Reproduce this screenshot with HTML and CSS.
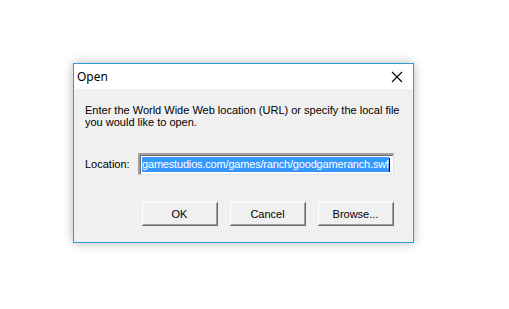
FILE: index.html
```html
<html>
<head>
<meta name="viewport" content="width=device-width, initial-scale=1">
<title>Open</title>
<link rel="stylesheet" href="styles.css">
</head>
<body>
<div class="desk">
	<div class="dialog">
		<div class="titlebar">
			<span class="title">Open</span>
			<svg class="close" width="12" height="12" viewBox="0 0 12 12">
				<path d="M1 1 L11 11 M11 1 L1 11" stroke="#000" stroke-width="1.1" fill="none"/>
			</svg>
		</div>
		<div class="body">
			<p class="info">Enter the World Wide Web location (URL) or specify the local file<br>you would like to open.</p>
			<div class="row">
				<label class="lbl">Location:</label>
				<div class="field">
					<span class="sel">gamestudios.com/games/ranch/goodgameranch.swf</span><span class="caret"></span>
				</div>
			</div>
			<div class="buttons">
				<button class="btn">OK</button>
				<button class="btn">Cancel</button>
				<button class="btn">Browse...</button>
			</div>
		</div>
	</div>
</div>
</body>
</html>
```
FILE: styles.css
```css
body {
margin: 0;
background: white;
font-family: "Liberation Sans", Arial, sans-serif;
}

.desk {
padding: 63px 0 0 73px;
}

.dialog {
width: 339px;
height: 178px;
border: 1px solid #2b9fd3;
background: #f0f0f0;
box-shadow: 0 0 10px rgba(0,0,0,0.28);
display: flex;
flex-direction: column;
}

.titlebar {
height: 25px;
background: white;
display: flex;
align-items: center;
justify-content: space-between;
padding: 0 10px 0 3px;
}

.title {
font-family: "Noto Sans", "Open Sans", sans-serif;
font-size: 12px;
color: black;
}

.close {
display: block;
}

.body {
padding: 0 0 0 11px;
font-size: 11px;
color: black;
}

.info {
margin: 15px 0 0 0;
line-height: 12px;
}

.row {
display: flex;
align-items: center;
margin-top: 25px;
}

.lbl {
width: 53px;
}

.field {
width: 251px;
height: 19px;
background: white;
border-top: 2px solid #a0a0a0;
border-left: 2px solid #a0a0a0;
border-right: 1px solid #e3e3e3;
border-bottom: 1px solid #e3e3e3;
box-shadow: inset 1px 1px 0 #696969;
display: flex;
align-items: center;
padding: 0 0 0 2px;
overflow: hidden;
}

.sel {
background: #3399ff;
color: white;
white-space: nowrap;
line-height: 15px;
font-size: 11px;
letter-spacing: -0.18px;
}

.caret {
width: 1px;
height: 14px;
background: black;
}

.buttons {
display: flex;
gap: 12px;
margin: 27px 0 0 57px;
}

.btn {
width: 76px;
height: 24px;
background: #f0f0f0;
border: none;
border-right: 1px solid #696969;
border-bottom: 1px solid #696969;
box-shadow: inset 1px 1px 0 white, inset -1px -1px 0 #a0a0a0;
font-family: "Liberation Sans", Arial, sans-serif;
font-size: 11px;
color: black;
padding: 0;
}
```
